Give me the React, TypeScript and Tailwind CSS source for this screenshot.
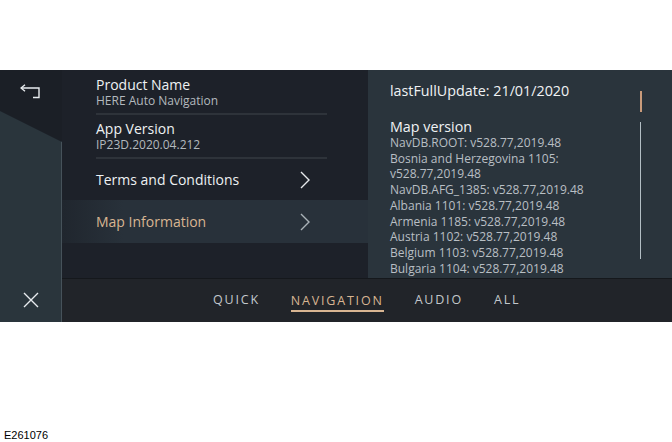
import React from 'react'

const font = { fontFamily: '"Open Sans", "Noto Sans", sans-serif' }

const mapLines = [
  'NavDB.ROOT: v528.77,2019.48',
  'Bosnia and Herzegovina 1105:',
  'v528.77,2019.48',
  'NavDB.AFG_1385: v528.77,2019.48',
  'Albania 1101: v528.77,2019.48',
  'Armenia 1185: v528.77,2019.48',
  'Austria 1102: v528.77,2019.48',
  'Belgium 1103: v528.77,2019.48',
  'Bulgaria 1104: v528.77,2019.48',
]

const tabs = ['QUICK', 'NAVIGATION', 'AUDIO', 'ALL']

function BackIcon() {
  return (
    <svg width="22" height="16" viewBox="0 0 22 16" fill="none" stroke="#e8ecef" strokeWidth="1.4">
      <path d="M1 4 H19 V13.5 H13" />
      <path d="M5 0.8 L1 4 L5 7.2" />
    </svg>
  )
}

function CloseIcon() {
  return (
    <svg width="16" height="16" viewBox="0 0 16 16" stroke="#e8ecef" strokeWidth="1.4">
      <path d="M1 1 L15 15 M15 1 L1 15" />
    </svg>
  )
}

function Chevron({ color }: { color: string }) {
  return (
    <svg width="12" height="18" viewBox="0 0 12 18" fill="none" stroke={color} strokeWidth="1.4">
      <path d="M2 1 L10 9 L2 17" />
    </svg>
  )
}

function InfoRow({ title, sub, h }: { title: string; sub: string; h: string }) {
  return (
    <div className={`flex ${h} flex-col justify-center pl-[34px]`}>
      <p className="text-[14px] leading-[17px] text-[#eef1f3]">{title}</p>
      <p className="text-[12px] leading-[15px] text-[#b3b9be]">{sub}</p>
    </div>
  )
}

export default function App() {
  return (
    <div className="w-[672px] h-[442px] bg-white flex flex-col" style={font}>
      <div className="h-[70px]" />

      {/* Screen */}
      <div className="flex h-[252px]">
        {/* Left rail */}
        <div className="flex w-[62px] flex-col bg-[#1b1f26]">
          <div className="flex h-[41px] items-start pt-[14px] pl-[20px]">
            <BackIcon />
          </div>
          <div className="flex flex-1 flex-col justify-end items-center border-r border-[#46525a] bg-[#2a353c] pb-[14px] [clip-path:polygon(0_0,100%_31px,100%_100%,0_100%)]">
            <CloseIcon />
          </div>
        </div>

        <div className="flex flex-1 flex-col">
          <div className="flex h-[208px]">
            {/* Middle list */}
            <div className="w-[306px] bg-[#1d2129]">
              <InfoRow title="Product Name" sub="HERE Auto Navigation" h="h-[43px]" />
              <div className="ml-[34px] mr-[41px] h-[2px] bg-[#2e333a]" />
              <InfoRow title="App Version" sub="IP23D.2020.04.212" h="h-[42px]" />
              <div className="ml-[34px] mr-[41px] h-[2px] bg-[#2e333a]" />
              <div className="flex h-[41px] items-center justify-between pl-[34px] pr-[57px]">
                <span className="text-[14px] text-[#eef1f3]">Terms and Conditions</span>
                <Chevron color="#e6e9ec" />
              </div>
              <div className="flex h-[43px] items-center justify-between bg-gradient-to-r from-[#20262e] to-[#28313a] to-[20%] pl-[34px] pr-[57px]">
                <span className="text-[14px] text-[#d8b592]">Map Information</span>
                <Chevron color="#aab2b8" />
              </div>
            </div>

            {/* Right details */}
            <div className="relative flex-1 overflow-hidden bg-[#2a343c] pl-[22px] pt-[12px]">
              <p className="text-[14.3px] leading-[18px] text-[#f0f2f4]">lastFullUpdate: 21/01/2020</p>
              <p className="mt-[19px] text-[14.3px] leading-[16px] text-[#f0f2f4]">Map version</p>
              <div className="text-[12px] leading-[15.7px] text-[#b9bfc4]">
                {mapLines.map((l, i) => (
                  <p key={i}>{l}</p>
                ))}
              </div>
              <div className="absolute left-[272px] top-[21px] h-[21px] w-[2px] bg-[#c99b7b]" />
              <div className="absolute left-[272px] top-[52px] h-[137px] w-[1px] bg-[#b3bec4]" />
            </div>
          </div>

          {/* Bottom tabs */}
          <div className="flex h-[44px] items-center gap-[31px] border-t border-[#15181c] bg-[#212429] pl-[151px]">
            {tabs.map((t) => (
              <span
                key={t}
                className={
                  t === 'NAVIGATION'
                    ? 'text-[12.5px] tracking-[1.8px] text-[#d8b592] border-b-2 border-[#d8b592] leading-[18px] mt-[3px]'
                    : 'text-[12.5px] tracking-[1.8px] text-[#c3c8cc] leading-[18px] mt-[1px] pb-[2px]'
                }
              >
                {t}
              </span>
            ))}
          </div>
        </div>
      </div>

      <div className="flex flex-1 items-end pl-[4px]">
        <span className="text-[11px] leading-[13px] text-black" style={{ fontFamily: '"Liberation Sans", Arial, sans-serif' }}>
          E261076
        </span>
      </div>
    </div>
  )
}
